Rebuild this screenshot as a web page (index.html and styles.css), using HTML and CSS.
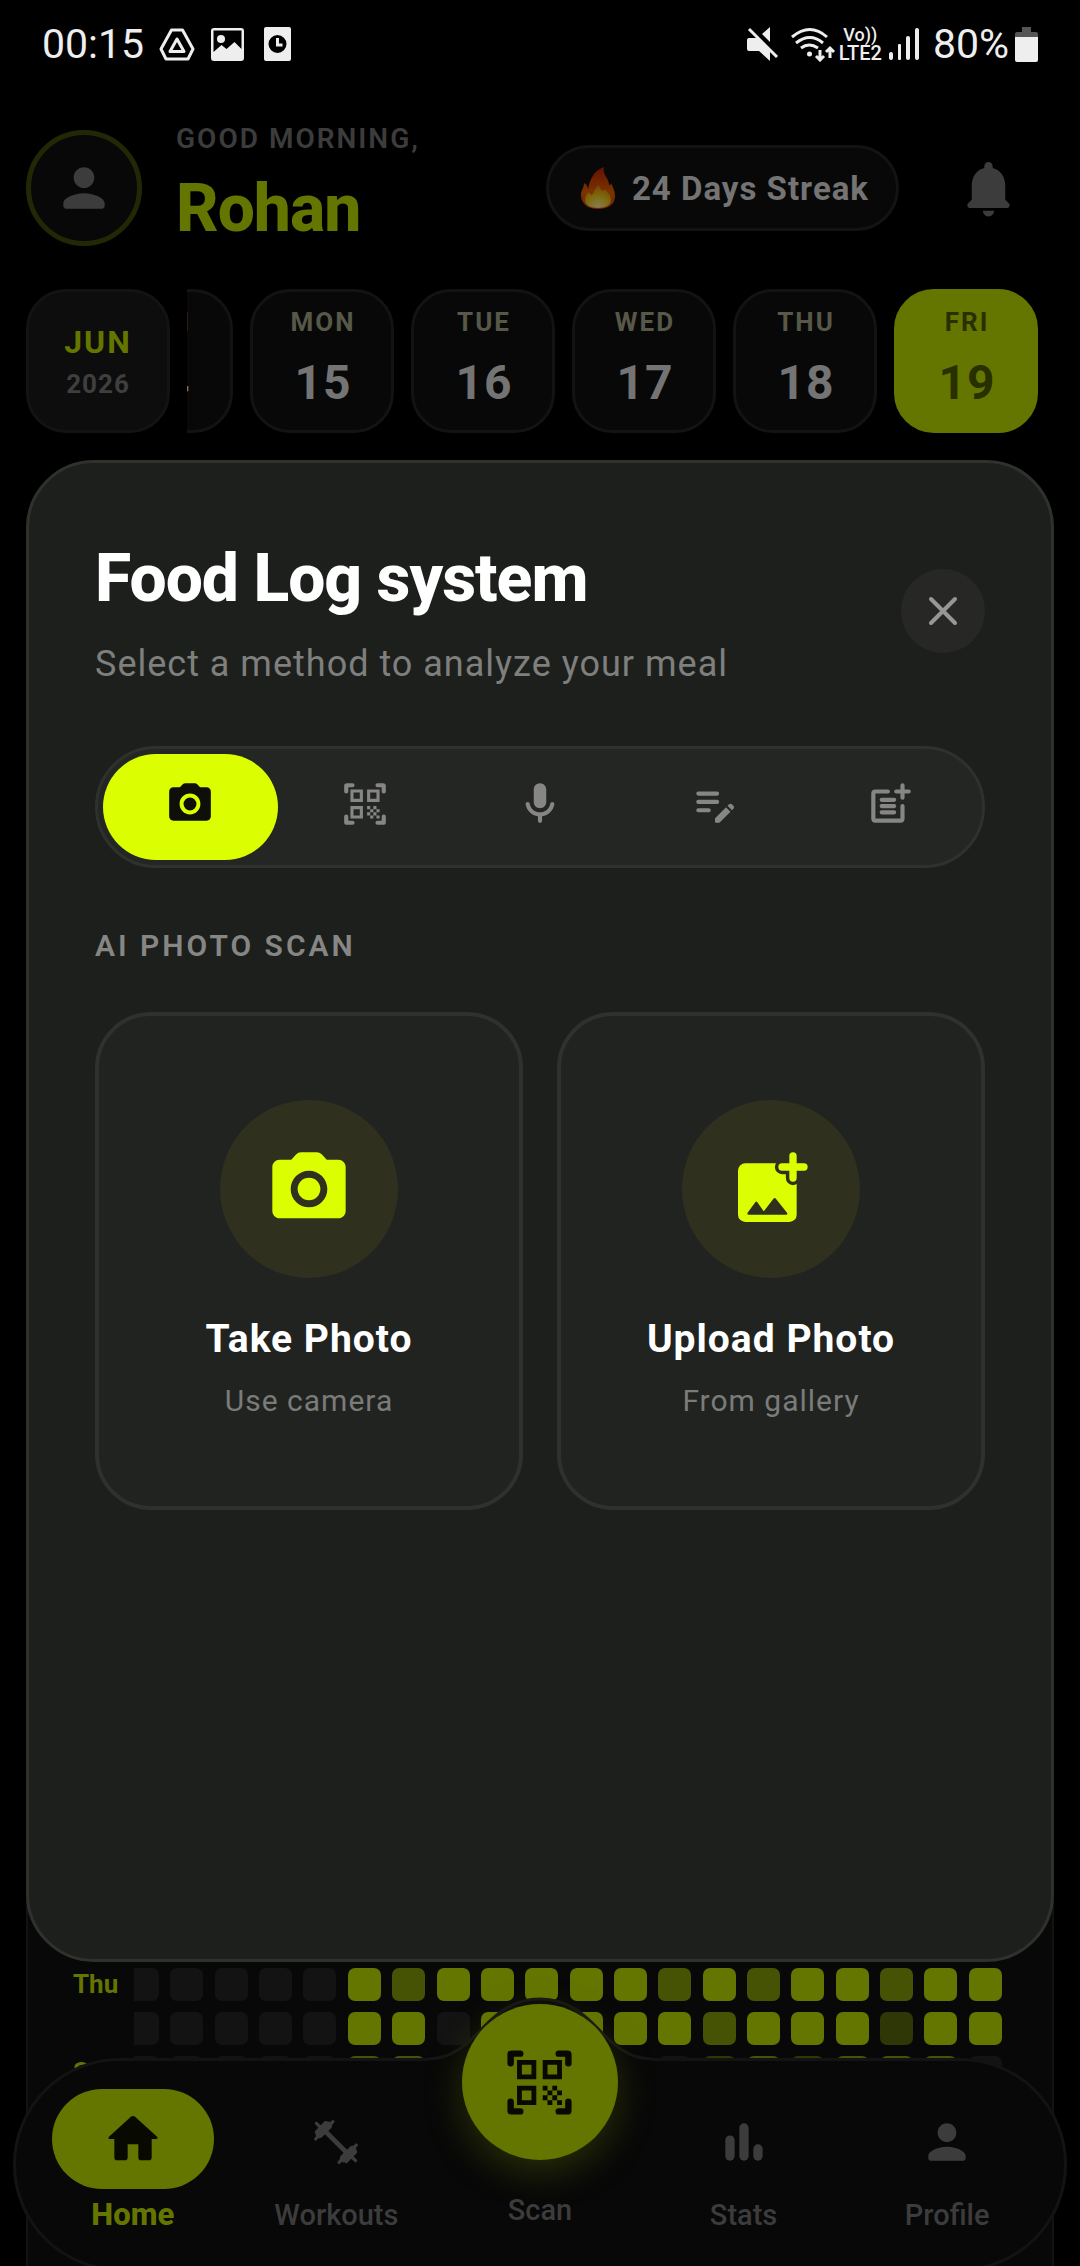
FILE: index.html
```html
<!DOCTYPE html>
<html lang="en">
<head>
  <meta charset="UTF-8" />
  <meta name="viewport" content="width=device-width, initial-scale=1" />
  <title>Food Log system</title>
  <link rel="stylesheet" href="styles.css">
</head>
<body>
  <!-- Shared icons -->
  <svg class="sprite" aria-hidden="true">
    <symbol id="icon-camera" viewBox="0 0 24 24">
      <circle cx="12" cy="12" r="3.1" />
      <path d="M8.4 2.65A2 2 0 0 1 9.88 2h4.24c.56 0 1.1.24 1.47.65L16.83 4H20c1.1 0 2 .9 2 2v12c0 1.1-.9 2-2 2H4c-1.1 0-2-.9-2-2V6c0-1.1.9-2 2-2h3.17zM12 17c2.76 0 5-2.24 5-5s-2.24-5-5-5-5 2.24-5 5 2.24 5 5 5z" />
    </symbol>
    <symbol id="icon-scan" viewBox="0 0 24 24">
      <path d="M9.5 6.5v3h-3v-3zM11 5H5v6h6zM9.5 14.5v3h-3v-3zM11 13H5v6h6zM17.5 6.5v3h-3v-3zM19 5h-6v6h6z" fill-rule="evenodd" />
      <path d="M13 13h1.5v1.5H13zM16 13h1.5v1.5H16zM14.5 14.5H16V16h-1.5zM17.5 14.5H19V16h-1.5zM13 16h1.5v1.5H13zM16 16h1.5v1.5H16zM14.5 17.5H16V19h-1.5zM17.5 17.5H19V19h-1.5z" />
      <path d="M3 6V3.3Q3 3 3.3 3H6M18 3h2.7q.3 0 .3.3V6M21 18v2.7q0 .3-.3.3H18M6 21H3.3Q3 21 3 20.7V18" fill="none" stroke="currentColor" stroke-width="2" stroke-linecap="round" />
    </symbol>
    <symbol id="icon-person" viewBox="0 0 24 24">
      <path d="M12 12c2.21 0 4-1.79 4-4s-1.79-4-4-4-4 1.79-4 4 1.79 4 4 4zm0 2c-2.67 0-8 1.34-8 4v1c0 .55.45 1 1 1h14c.55 0 1-.45 1-1v-1c0-2.66-5.33-4-8-4z" />
    </symbol>
  </svg>

  <div class="app">
    <div class="status-bar">
      <div class="status-left">
        <span class="status-text">00:15</span>
        <svg class="status-drive" viewBox="0 0 36 33" fill="none" stroke="currentColor" stroke-linejoin="round">
          <path d="M12.5 2h11L34 21l-5 10H7L2 21z" stroke-width="3" />
          <path d="M18 11l7 12.5H11z" stroke-width="3" />
        </svg>
        <svg class="status-image" viewBox="0 0 33 33">
          <path fill-rule="evenodd" d="M3 0h27a3 3 0 0 1 3 3v27a3 3 0 0 1-3 3H3a3 3 0 0 1-3-3V3a3 3 0 0 1 3-3zM2.5 2.5V24l8-7 5 4 8-7 7 7V2.5z" />
          <circle cx="10" cy="11" r="4" />
        </svg>
        <svg class="status-clock" viewBox="0 0 27 34">
          <path fill-rule="evenodd" d="M2 0h23a2 2 0 0 1 2 2v30a2 2 0 0 1-2 2H2a2 2 0 0 1-2-2V2a2 2 0 0 1 2-2zM13.5 8a9 9 0 1 0 0 18 9 9 0 0 0 0-18z" />
          <path d="M13.5 11v7h5" fill="none" stroke="currentColor" stroke-width="3" />
        </svg>
      </div>
      <div class="status-right">
        <svg class="status-mute" viewBox="0 0 32 34">
          <path d="M2 11h8l13 13v10l-11-10H2a2 2 0 0 1-2-2V13a2 2 0 0 1 2-2zM23 0v15l-8-8z" />
          <path d="M2 2l28 28" stroke="currentColor" stroke-width="3" />
        </svg>
        <svg class="status-wifi" viewBox="0 0 45 35" fill="none" stroke="currentColor" stroke-width="3">
          <path d="M1 10q18-15 35 0M5 16q14-11 27 0M10 21q8-6 17 0" />
          <circle cx="18.5" cy="27" r="2.5" fill="currentColor" stroke="none" />
          <path d="M29 23v10M25 29l4 4 4-4M39 31V21M35 25l4-4 4 4" />
        </svg>
        <div class="network"><span>Vo))</span><span class="network-type">LTE2</span></div>
        <svg class="status-signal" viewBox="0 0 30 32">
          <rect x="0" y="24" width="4" height="8" rx="2" /><rect x="9" y="16" width="3" height="16" rx="1" />
          <rect x="17" y="8" width="4" height="24" rx="2" /><rect x="26" y="0" width="4" height="32" rx="2" />
        </svg>
        <span class="status-text">80%</span>
        <svg class="status-battery" viewBox="0 0 23 35">
          <path d="M7 0h9v5h5a2 2 0 0 1 2 2v4H0V7a2 2 0 0 1 2-2h5z" fill="#555" />
          <path d="M0 10h23v23a2 2 0 0 1-2 2H2a2 2 0 0 1-2-2z" />
        </svg>
      </div>
    </div>

    <header class="header">
      <div class="avatar"><svg viewBox="0 0 24 24"><use href="#icon-person" /></svg></div>
      <div class="greeting">
        <p class="greeting-text">GOOD MORNING,</p>
        <h1 class="user-name">Rohan</h1>
      </div>
      <div class="streak">
        <svg class="flame" viewBox="0 0 34 42">
          <defs>
            <linearGradient id="flameOuter" x1="0" y1="0" x2="0" y2="1">
              <stop offset="0" stop-color="#651000" />
              <stop offset=".6" stop-color="#793400" />
              <stop offset="1" stop-color="#74200a" />
            </linearGradient>
            <radialGradient id="flameInner" cx=".5" cy=".9" r=".8">
              <stop offset="0" stop-color="#867b50" />
              <stop offset=".5" stop-color="#7d6d10" />
              <stop offset="1" stop-color="#784900" />
            </radialGradient>
          </defs>
          <path d="M23 0c-2 8 5 11 5 18 2 0 2-2 2-2 2 4 4 8 4 13 0 8-6 13-17 13S0 36 0 28c0-5 3-7 3-12 3 1 4 5 4 6C9 13 12 4 23 0z" fill="url(#flameOuter)" />
          <path d="M18 18c1 6 5 7 6 4 3 3 6 7 6 11 0 5-5 8-13 8S4 38 4 33c0-4 2-6 4-8 1 2 2 3 3 3 2-2 3-8 7-10z" fill="url(#flameInner)" />
        </svg>
        <span>24 Days Streak</span>
      </div>
      <button class="bell" aria-label="Notifications">
        <svg viewBox="0 0 24 24"><path d="M12 22c1.1 0 2-.9 2-2h-4c0 1.1.89 2 2 2zm6-6v-5c0-3.07-1.63-5.64-4.5-6.32V4c0-.83-.67-1.5-1.5-1.5s-1.5.67-1.5 1.5v.68C7.64 5.36 6 7.92 6 11v5l-1.29 1.29c-.63.63-.19 1.71.7 1.71h13.17c.89 0 1.34-1.08.71-1.71L18 16z" /></svg>
      </button>
    </header>

    <div class="calendar">
      <button class="month"><span class="month-name">JUN</span><span class="month-year">2026</span></button>
      <div class="days">
        <button class="day"><span class="day-name">SUN</span><span class="day-number">14</span></button>
        <button class="day"><span class="day-name">MON</span><span class="day-number">15</span></button>
        <button class="day"><span class="day-name">TUE</span><span class="day-number">16</span></button>
        <button class="day"><span class="day-name">WED</span><span class="day-number">17</span></button>
        <button class="day"><span class="day-name">THU</span><span class="day-number">18</span></button>
        <button class="day selected"><span class="day-name">FRI</span><span class="day-number">19</span></button>
      </div>
    </div>

    <!-- Activity card behind the dialog -->
    <section class="activity">
      <div class="activity-row">
        <span class="activity-label">Thu</span>
        <div class="cells"><div class="cells-track">
          <i></i><i></i><i></i><i></i><i></i><i class="high"></i><i class="mid"></i><i class="high"></i><i class="high"></i><i class="high"></i>
          <i class="high"></i><i class="high"></i><i class="mid"></i><i class="high"></i><i class="mid"></i><i class="high"></i><i class="high"></i><i class="mid"></i><i class="high"></i><i class="high"></i>
        </div></div>
      </div>
      <div class="activity-row">
        <span class="activity-label"></span>
        <div class="cells"><div class="cells-track">
          <i></i><i></i><i></i><i></i><i></i><i class="high"></i><i class="high"></i><i></i><i class="high"></i><i class="high"></i>
          <i class="high"></i><i class="high"></i><i class="high"></i><i class="mid"></i><i class="high"></i><i class="high"></i><i class="high"></i><i class="low"></i><i class="high"></i><i class="high"></i>
        </div></div>
      </div>
      <div class="activity-row">
        <span class="activity-label">Sat</span>
        <div class="cells"><div class="cells-track">
          <i></i><i></i><i></i><i></i><i></i><i class="mid"></i><i class="mid"></i><i></i><i></i><i></i>
          <i></i><i></i><i></i><i class="low"></i><i class="mid"></i><i class="low"></i><i class="mid"></i><i class="mid"></i><i class="mid"></i><i></i>
        </div></div>
      </div>
    </section>

    <nav class="bottom-nav">
      <svg class="nav-bump" viewBox="0 0 224 72">
        <path d="M0 62C50 62 56 2 112 2S174 62 224 62V72H0z" fill="#080808" />
        <path d="M0 62C50 62 56 2 112 2S174 62 224 62" fill="none" stroke="#151515" stroke-width="3" />
      </svg>
      <a href="#" class="nav-item active">
        <span class="nav-icon"><svg viewBox="0 0 24 24"><path d="M10 19v-5h4v5c0 .55.45 1 1 1h3c.55 0 1-.45 1-1v-7h1.7c.46 0 .68-.57.33-.87L12.67 3.6c-.38-.34-.96-.34-1.34 0l-8.36 7.53c-.34.3-.13.87.33.87H5v7c0 .55.45 1 1 1h3c.55 0 1-.45 1-1z" /></svg></span>
        <span>Home</span>
      </a>
      <a href="#" class="nav-item">
        <span class="nav-icon"><svg viewBox="0 0 24 24" fill="none" stroke="currentColor" stroke-linecap="round" stroke-linejoin="round"><path d="M6 6l12 12" stroke-width="2" /><path d="M5 8.600L8.600 5M15.400 19L19 15.400" stroke-width="3.400" /><path d="M3.300 10.700l7.400-7.400M3.600 7.800L7.600 3.600M3.600 4l2 2M13.300 20.700l7.400-7.400M16.400 20.400l4-4.200M18.400 18l2 2" stroke-width="1.400" /></svg></span>
        <span>Workouts</span>
      </a>
      <a href="#" class="nav-item scan">
        <span class="scan-circle"><svg viewBox="0 0 24 24"><use href="#icon-scan" /></svg></span>
        <span>Scan</span>
      </a>
      <a href="#" class="nav-item">
        <span class="nav-icon"><svg viewBox="0 0 24 24"><rect x="4" y="9.2" width="4" height="10.8" rx="2" /><rect x="10" y="4" width="4" height="16" rx="2" /><rect x="16" y="13" width="4" height="7" rx="2" /></svg></span>
        <span>Stats</span>
      </a>
      <a href="#" class="nav-item">
        <span class="nav-icon"><svg viewBox="0 0 24 24"><use href="#icon-person" /></svg></span>
        <span>Profile</span>
      </a>
    </nav>

    <div class="modal" role="dialog" aria-labelledby="modalTitle">
      <div class="modal-header">
        <div>
          <h2 class="modal-title" id="modalTitle">Food Log system</h2>
          <p class="modal-subtitle">Select a method to analyze your meal</p>
        </div>
        <button class="close-button" aria-label="Close">
          <svg viewBox="0 0 30 30"><path d="M3 3l24 24M27 3L3 27" fill="none" stroke="currentColor" stroke-width="4" stroke-linecap="round" /></svg>
        </button>
      </div>

      <div class="tabs">
        <button class="tab active" aria-label="Photo"><svg viewBox="0 0 24 24"><use href="#icon-camera" /></svg></button>
        <button class="tab" aria-label="Barcode"><svg viewBox="0 0 24 24"><use href="#icon-scan" /></svg></button>
        <button class="tab" aria-label="Voice"><svg viewBox="0 0 24 24"><path d="M12 14c1.66 0 3-1.34 3-3V5c0-1.66-1.34-3-3-3S9 3.34 9 5v6c0 1.66 1.34 3 3 3zm5.91-3c-.49 0-.9.36-.98.85C16.52 14.2 14.47 16 12 16s-4.52-1.8-4.93-4.15c-.08-.49-.49-.85-.98-.85-.61 0-1.09.54-1 1.14.49 3 2.89 5.35 5.91 5.78V20c0 .55.45 1 1 1s1-.45 1-1v-2.08c3.02-.43 5.42-2.78 5.91-5.78.1-.6-.39-1.14-1-1.14z" /></svg></button>
        <button class="tab" aria-label="Text"><svg viewBox="0 0 24 24"><path d="M4 7h9M4 11h9M4 15h5" fill="none" stroke="currentColor" stroke-width="2" stroke-linecap="round" /><path d="M18.01 12.87l.71-.71c.39-.39 1.02-.39 1.41 0l.71.71c.39.39.39 1.02 0 1.41l-.71.71zm-.71.71-5.16 5.16c-.09.09-.14.21-.14.35v1.41c0 .28.22.5.5.5h1.41c.13 0 .26-.05.35-.15l5.16-5.16z" /></svg></button>
        <button class="tab" aria-label="Manual entry"><svg viewBox="0 0 24 24"><path d="M11 6H5q-1 0-1 1v12q0 1 1 1h12q1 0 1-1v-6M8 10h6M8 13h6M8 16h6M18 3v6M15 6h6" fill="none" stroke="currentColor" stroke-width="2" stroke-linecap="round" /></svg></button>
      </div>

      <h3 class="section-title">AI PHOTO SCAN</h3>
      <div class="options">
        <button class="option">
          <span class="option-icon"><svg viewBox="0 0 24 24"><use href="#icon-camera" /></svg></span>
          <span class="option-title">Take Photo</span>
          <span class="option-text">Use camera</span>
        </button>
        <button class="option">
          <span class="option-icon">
            <svg viewBox="0 0 24 24">
              <rect x="3" y="5" width="16" height="16" rx="2" />
              <path d="M5.9 18.7l2.1-2.9 2 2.9 3-3.9 3.1 3.9z" fill="#2f311e" stroke="#2f311e" stroke-width=".7" stroke-linejoin="round" />
              <path d="M18 3v6M15 6h6" stroke="#2f311e" stroke-width="3.9" stroke-linecap="round" />
              <path d="M18 3v6M15 6h6" stroke="currentColor" stroke-width="2" stroke-linecap="round" />
            </svg>
          </span>
          <span class="option-title">Upload Photo</span>
          <span class="option-text">From gallery</span>
        </button>
      </div>
    </div>
  </div>
</body>
</html>
```
FILE: styles.css
```css
* {
  box-sizing: border-box;
}
body {
  font-family: Roboto, Arial, sans-serif;
  margin: 0;
  background-color: #000;
  color: #fff;
}
h1, h2, h3, p {
  margin: 0;
}
button {
  font-family: inherit;
  color: inherit;
  border: none;
  padding: 0;
  cursor: pointer;
}
svg {
  display: block;
  fill: currentColor;
}
svg[fill="none"] {
  fill: none;
}
.sprite {
  position: absolute;
  width: 0;
  height: 0;
}
.app {
  position: relative;
  display: flex;
  flex-direction: column;
  height: 100vh;
  min-height: 2000px;
  overflow: hidden;
}

/* Status bar */
.status-bar {
  display: flex;
  justify-content: space-between;
  height: 88px;
  padding: 0 42px;
  color: #eee;
}
.status-left, .status-right {
  display: flex;
  align-items: center;
}
.status-text {
  font-size: 41px;
}
.status-drive {
  width: 36px;
  height: 33px;
  margin-left: 15px;
}
.status-image {
  width: 33px;
  height: 33px;
  margin-left: 16px;
}
.status-clock {
  width: 27px;
  height: 34px;
  margin-left: 20px;
}
.status-mute {
  width: 32px;
  height: 34px;
  margin-right: 12px;
}
.status-wifi {
  width: 45px;
  height: 35px;
  margin-right: 3px;
}
.network {
  display: flex;
  flex-direction: column;
  align-items: center;
  font-size: 18px;
  font-weight: 500;
  line-height: 18px;
}
.network-type {
  font-size: 20px;
}
.status-signal {
  width: 30px;
  height: 32px;
  margin: 0 14px 0 7px;
}
.status-battery {
  width: 23px;
  height: 35px;
  margin-left: 6px;
}

/* Header */
.header {
  display: flex;
  align-items: center;
  padding: 33px 26px 34px;
}
.avatar {
  display: flex;
  justify-content: center;
  align-items: center;
  width: 116px;
  height: 116px;
  border: 5px solid #222806;
  border-radius: 50%;
  background-color: #080808;
  color: #3c3c3c;
}
.avatar svg {
  width: 62px;
  height: 62px;
}
.greeting {
  flex: 1;
  margin-left: 34px;
  padding-top: 2px;
}
.greeting-text {
  font-size: 28px;
  font-weight: 600;
  line-height: 32px;
  letter-spacing: 2px;
  color: #3c3c3c;
}
.user-name {
  margin-top: 8px;
  font-size: 66px;
  font-weight: 800;
  line-height: 92px;
  letter-spacing: -1px;
  color: #647500;
}
.streak {
  display: flex;
  align-items: center;
  gap: 17px;
  height: 86px;
  padding: 0 27px 0 32px;
  border: 3px solid #131313;
  border-radius: 43px;
  background-color: #080808;
  color: #747474;
  font-size: 33px;
  font-weight: 700;
  letter-spacing: 1px;
}
.flame {
  width: 34px;
  height: 42px;
}
.bell {
  display: flex;
  justify-content: center;
  width: 132px;
  margin-left: 23px;
  background: none;
  color: #3c3c3c;
}
.bell svg {
  width: 67px;
  height: 67px;
}

/* Calendar */
.calendar {
  display: flex;
  gap: 17px;
  padding: 0 26px;
}
.month, .day {
  display: flex;
  flex-direction: column;
  flex-shrink: 0;
  justify-content: center;
  align-items: center;
  width: 144px;
  height: 144px;
  padding: 3px 0 0 2px;
  border: 3px solid #131313;
  border-radius: 40px;
  background-color: #080808;
  font-weight: 700;
}
.month {
  padding-left: 0;
  background-color: #0d0d0d;
}
.month-name {
  font-size: 32px;
  line-height: 42px;
  letter-spacing: 2px;
  color: #647500;
}
.month-year {
  font-size: 26px;
  line-height: 42px;
  letter-spacing: 1px;
  color: #3f3f3f;
}
.days {
  flex: 1;
  display: flex;
  justify-content: flex-end;
  gap: 17px;
  padding-right: 16px;
  overflow: hidden;
}
.day-name {
  font-size: 26px;
  line-height: 40px;
  letter-spacing: 2px;
  color: #575848;
}
.day-number {
  font-size: 48px;
  line-height: 82px;
  letter-spacing: 1px;
  color: #747474;
}
.day.selected {
  background-color: #647500;
  border-color: #647500;
}
.day.selected span {
  color: #293000;
}

/* Activity card */
.activity {
  flex: 1;
  display: flex;
  flex-direction: column;
  justify-content: flex-end;
  gap: 11px;
  margin: 100px 26px 0;
  padding: 0 50px 177px 45px;
  border: 2px solid #131313;
  border-bottom: none;
  background-color: #080808;
}
.activity-row {
  display: flex;
}
.activity-label {
  width: 61px;
  font-size: 26px;
  font-weight: 700;
  line-height: 32px;
  color: #647500;
}
.cells {
  flex: 1;
  overflow: hidden;
}
.cells-track {
  display: flex;
  justify-content: space-between;
  margin-left: -8px;
}
.cells i {
  width: 33px;
  height: 33px;
  border-radius: 7px;
  background-color: #131313;
}
.cells .low {
  background-color: #303706;
}
.cells .mid {
  background-color: #475304;
}
.cells .high {
  background-color: #647500;
}

/* Bottom navigation */
.bottom-nav {
  position: absolute;
  left: 13px;
  right: 13px;
  bottom: -5px;
  display: flex;
  height: 213px;
  padding: 28px 15px 0;
  border: 3px solid #131313;
  border-radius: 107px;
  background-color: #080808;
}
.nav-bump {
  position: absolute;
  left: 50%;
  top: -64px;
  width: 224px;
  height: 72px;
  margin-left: -112px;
}
.nav-item {
  position: relative;
  flex: 1;
  display: flex;
  flex-direction: column;
  align-items: center;
  font-size: 29px;
  font-weight: 500;
  line-height: 36px;
  color: #3c3c3c;
  text-decoration: none;
}
.nav-icon {
  display: flex;
  justify-content: center;
  align-items: center;
  width: 162px;
  height: 100px;
  margin-bottom: 8px;
  padding-top: 6px;
  border-radius: 50px;
}
.nav-icon svg {
  width: 56px;
  height: 56px;
}
.nav-item.active {
  color: #647500;
  font-size: 31px;
  font-weight: 800;
}
.active .nav-icon {
  padding-top: 0;
  background-color: #647500;
  color: #080900;
}
.active .nav-icon svg {
  width: 64px;
  height: 64px;
}
.nav-item.scan {
  padding-top: 103px;
}
.scan-circle {
  position: absolute;
  bottom: 108px;
  display: flex;
  justify-content: center;
  align-items: center;
  width: 156px;
  height: 156px;
  border-radius: 50%;
  background-color: #647500;
  color: #080900;
  box-shadow: 0 12px 36px rgba(100, 117, 0, 0.35);
}
.scan-circle svg {
  width: 77px;
  height: 77px;
}

/* Food log dialog */
.modal {
  position: absolute;
  top: 460px;
  right: 26px;
  bottom: 304px;
  left: 26px;
  padding: 77px 66px;
  border: 3px solid #2f312d;
  border-radius: 68px;
  background-color: #1d1f1c;
}
.modal-header {
  display: flex;
  justify-content: space-between;
  align-items: center;
}
.modal-title {
  font-size: 66px;
  font-weight: 800;
  line-height: 78px;
  letter-spacing: -1px;
}
.modal-subtitle {
  margin-top: 28px;
  font-size: 36px;
  line-height: 36px;
  letter-spacing: 1px;
  color: #7f7f7e;
}
.close-button {
  display: flex;
  justify-content: center;
  align-items: center;
  width: 84px;
  height: 84px;
  border-radius: 50%;
  background-color: #272826;
  color: #979797;
}
.close-button svg {
  width: 30px;
  height: 30px;
}
.tabs {
  display: flex;
  height: 122px;
  margin-top: 64px;
  padding: 5px;
  border: 3px solid #2f312d;
  border-radius: 61px;
  background-color: #242623;
}
.tab {
  flex: 1;
  display: flex;
  justify-content: center;
  align-items: center;
  padding-bottom: 7px;
  border-radius: 53px;
  background: none;
  color: #868685;
}
.tab.active {
  background-color: #dbff00;
  color: #0d0f08;
}
.tab svg {
  width: 50px;
  height: 50px;
}
.section-title {
  margin-top: 60px;
  font-size: 30px;
  font-weight: 600;
  line-height: 36px;
  letter-spacing: 3px;
  color: #868685;
}
.options {
  display: flex;
  gap: 34px;
  margin-top: 48px;
}
.option {
  flex: 1;
  display: flex;
  flex-direction: column;
  align-items: center;
  padding: 84px 20px 87px;
  border: 4px solid #2f312e;
  border-radius: 56px;
  background-color: #212320;
}
.option-icon {
  display: flex;
  justify-content: center;
  align-items: center;
  width: 178px;
  height: 178px;
  border-radius: 50%;
  background-color: #2f311e;
  color: #dbff00;
}
.option-icon svg {
  width: 88px;
  height: 88px;
}
.option-title {
  margin-top: 38px;
  font-size: 39px;
  font-weight: 700;
  line-height: 46px;
  letter-spacing: 1px;
}
.option-text {
  margin-top: 21px;
  font-size: 30px;
  line-height: 36px;
  letter-spacing: 1px;
  color: #7b7b7a;
}
```
